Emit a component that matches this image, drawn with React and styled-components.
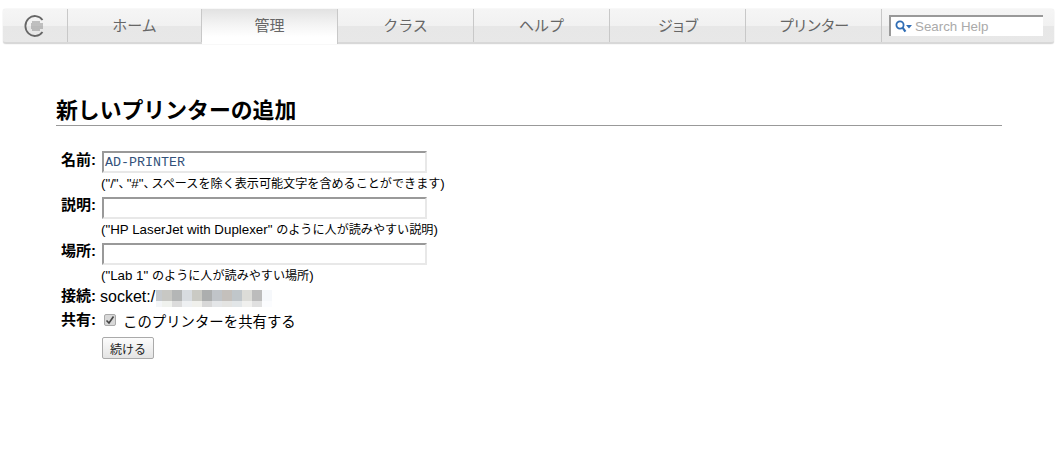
import React from "react";
import styled, { createGlobalStyle } from "styled-components";

const sansStack = `"Liberation Sans", "Noto Sans CJK JP", sans-serif`;

const GlobalStyle = createGlobalStyle`
  html, body {
    margin: 0;
    padding: 0;
    background: #fff;
    font-family: ${sansStack};
    color: #000;
  }
  * { box-sizing: border-box; }
`;

const Page = styled.div`
  width: 1061px;
  height: 472px;
  padding: 9px 7px 0 3px;
  overflow: hidden;
`;

const Nav = styled.nav`
  display: grid;
  grid-template-columns: 65px 134px repeat(5, 136px) 172px;
  height: 35px;
  border-radius: 3px;
  box-shadow: 0 0 1px #bbb;
  background: linear-gradient(to bottom, #f5f5f5 0%, #f1f1f1 50%, #e7e7e7 51%, #e8e8e8 100%);
  border-bottom: 2px solid #d8d8d8;
`;

const Tab = styled.a`
  display: flex;
  align-items: center;
  justify-content: center;
  height: ${(p) => (p.$active ? "35px" : "33px")};
  border-right: 1px solid #c8c8c8;
  font-size: 15px;
  padding-bottom: ${(p) => (p.$active ? "4px" : "3px")};
  letter-spacing: ${(p) => p.$tracking || 0}px;
  color: #666;
  background: ${(p) => (p.$active ? "linear-gradient(to bottom, #e2e2e2 0%, #f4f4f4 45%, #fff 80%)" : "transparent")};
`;

const LogoTab = styled(Tab)`
  padding-bottom: 0;
`;

const SearchCell = styled.div`
  display: flex;
  align-items: center;
  padding-left: 7px;
  height: 33px;
`;

const SearchBox = styled.div`
  display: flex;
  align-items: center;
  width: 154px;
  height: 21px;
  background: #fff;
  border-top: 2px solid #999;
  border-left: 2px solid #999;
  padding-left: 4px;
  font-size: 13.33px;
  color: #aaa;
  gap: 3px;
`;

const Content = styled.main`
  padding: 49px 52px 0 53px;
`;

const Title = styled.h1`
  margin: 0;
  font-size: 21.85px;
  line-height: 36px;
  height: 33px;
  font-weight: bold;
  border-bottom: 1px solid #999;
`;

const FormGrid = styled.div`
  display: grid;
  grid-template-columns: 40px 1fr;
  column-gap: 6px;
  padding-top: 25px;
`;

const Label = styled.div`
  font-size: 15px;
  font-weight: bold;
  line-height: 16px;
  text-align: right;
  padding-top: ${(p) => p.$nudge || 0}px;
`;

const Field = styled.div`
  display: flex;
  flex-direction: column;
  height: ${(p) => p.$height}px;
`;

const TextBox = styled.div`
  width: 325px;
  height: 22px;
  border: 2px solid #e8e8e8;
  border-top-color: #999;
  border-left-color: #999;
  background: #fff;
  font-family: "Liberation Mono", monospace;
  font-size: 13.33px;
  line-height: 20px;
  padding-left: 1px;
  color: #33527a;
`;

const Hint = styled.div`
  font-size: 13.33px;
  line-height: 14px;
  margin: 4px 0 0 -1px;
  white-space: nowrap;
`;

const HintCjk = styled.span`
  font-size: 12.1px;
`;

const HintComma = styled.span`
  font-size: 12px;
  letter-spacing: -4px;
`;

const ConnectionRow = styled.div`
  display: flex;
  align-items: center;
  font-size: 16px;
  height: 18px;
  margin-left: -2px;
`;

const Mosaic = styled.div`
  display: grid;
  grid-template-rows: 11px 6px;
  grid-template-columns: 6px repeat(11, 10px);
  grid-auto-flow: column;
  margin-left: 1px;
  margin-top: 2px;
`;

const MosaicCell = styled.span`
  display: block;
  background: ${(p) => p.$color};
`;

const ShareRow = styled.div`
  display: flex;
  align-items: center;
  gap: 7px;
  font-size: 14.4px;
  height: 18px;
  padding-left: 2px;
`;

const CheckMark = styled.span`
  display: flex;
  align-items: center;
  justify-content: center;
  width: 12px;
  height: 12px;
  border: 1px solid #aaa;
  border-radius: 2px;
  background: #d8d8d8;
`;

const Submit = styled.button`
  width: 52px;
  height: 22px;
  padding: 0;
  font-family: ${sansStack};
  font-size: 12px;
  color: #222;
  border: 1px solid #aaa;
  border-radius: 2px;
  background: linear-gradient(to bottom, #fcfcfc, #e4e4e4);
`;

const Logo = () => (
  <svg width="22" height="24" viewBox="0 0 22 24" fill="none">
    <path d="M18.5 6 A9.5 10 0 1 0 18.5 18" stroke="#666" strokeWidth="1.8" />
    <path d="M8 8h8M7 10h12M7 12h12M7 14h12M8 16h8" stroke="#8c8c8c" strokeWidth="1" />
  </svg>
);

const SearchIcon = () => (
  <svg width="17" height="13" viewBox="0 0 17 13" fill="none">
    <circle cx="5" cy="5" r="3.6" stroke="#2f6db5" strokeWidth="1.8" />
    <path d="M7.6 7.6 10.4 11.6" stroke="#2f6db5" strokeWidth="2.2" />
    <path d="M11 5h6l-3 3.4z" fill="#2f6db5" />
  </svg>
);

const tabs = [
  { label: "ホーム" },
  { label: "管理", active: true },
  { label: "クラス" },
  { label: "ヘルプ" },
  { label: "ジョブ", tracking: -2 },
  { label: "プリンター", tracking: -1.2 },
];

const mosaicCells = [
  ["#c6cace", "#f4f6f8"],
  ["#c8c8c4", "#f0f2ee"],
  ["#b4b6b6", "#dcdcdc"],
  ["#d8dce0", "#eef0f2"],
  ["#cacac4", "#f0f0ec"],
  ["#acaeae", "#d8d8d8"],
  ["#c0c4c8", "#e4e6e8"],
  ["#c4c0bc", "#e4e4e2"],
  ["#c0c6ca", "#e2e6e8"],
  ["#dcdcd8", "#f0f0ee"],
  ["#bcbcbc", "#e0e0e0"],
  ["#f6f8fb", "#fbfcfe"],
];

export default function App() {
  return (
    <>
      <GlobalStyle />
      <Page>
        <Nav>
          <LogoTab><Logo /></LogoTab>
          {tabs.map((t) => (
            <Tab key={t.label} $active={t.active} $tracking={t.tracking}>{t.label}</Tab>
          ))}
          <SearchCell>
            <SearchBox><SearchIcon />Search Help</SearchBox>
          </SearchCell>
        </Nav>
        <Content>
          <Title>新しいプリンターの追加</Title>
          <FormGrid>
            <Label $nudge="1">名前:</Label>
            <Field $height="46">
              <TextBox>AD-PRINTER</TextBox>
              <Hint>("/"<HintComma>、</HintComma>"#"<HintComma>、</HintComma><HintCjk>スペースを除く表示可能文字を含めることができます</HintCjk>)</Hint>
            </Field>
            <Label>説明:</Label>
            <Field $height="46">
              <TextBox />
              <Hint>("HP LaserJet with Duplexer" <HintCjk>のように人が読みやすい説明</HintCjk>)</Hint>
            </Field>
            <Label>場所:</Label>
            <Field $height="45">
              <TextBox />
              <Hint>("Lab 1" <HintCjk>のように人が読みやすい場所</HintCjk>)</Hint>
            </Field>
            <Label>接続:</Label>
            <Field $height="23">
              <ConnectionRow>
                socket:/
                <Mosaic>
                  {mosaicCells.flat().map((c, i) => (
                    <MosaicCell key={i} $color={c} />
                  ))}
                </Mosaic>
              </ConnectionRow>
            </Field>
            <Label $nudge="1">共有:</Label>
            <Field $height="26">
              <ShareRow>
                <CheckMark>
                  <svg width="10" height="10" viewBox="0 0 10 10" fill="none">
                    <path d="M1.5 5.5 4 8l4.5-6.5" stroke="#444" strokeWidth="1.6" />
                  </svg>
                </CheckMark>
                このプリンターを共有する
              </ShareRow>
            </Field>
            <span />
            <Submit>続ける</Submit>
          </FormGrid>
        </Content>
      </Page>
    </>
  );
}
